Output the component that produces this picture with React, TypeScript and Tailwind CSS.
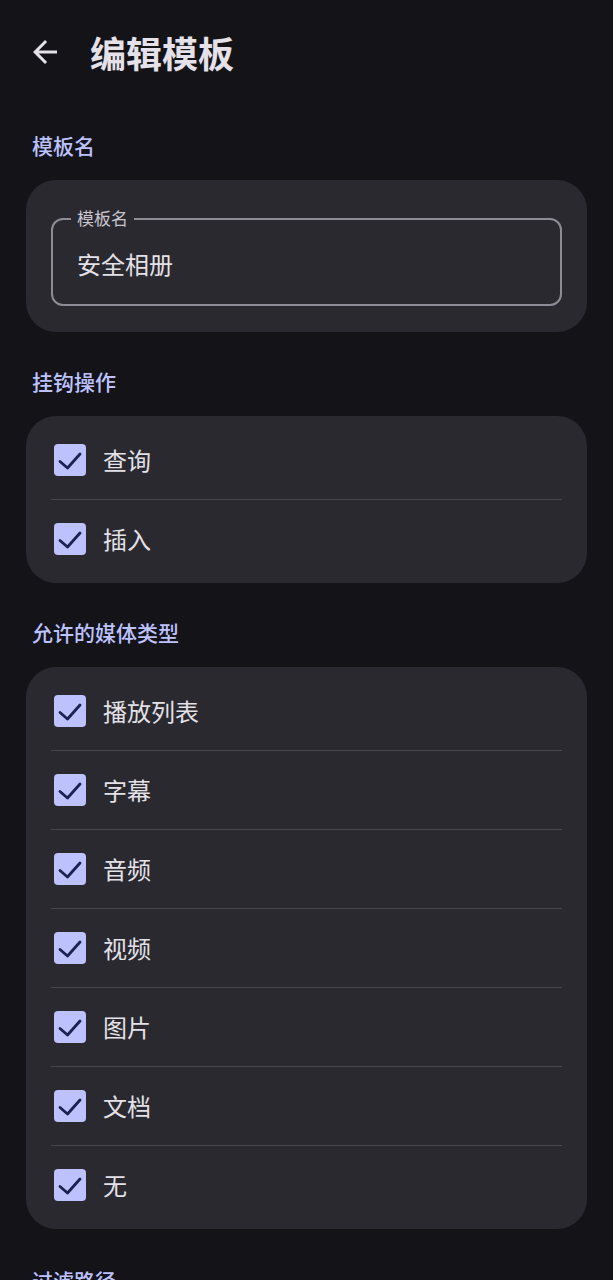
import React from "react";

const font = { fontFamily: '"Noto Sans CJK SC", "Noto Sans", sans-serif' };

function Check() {
  return (
    <div className="ml-[3px] flex h-[32px] w-[32px] shrink-0 items-center justify-center rounded-[4px] bg-[#bdc2ff]">
      <svg width="32" height="32" viewBox="0 0 32 32">
        <polyline points="6,17.5 13.5,24 26,10" fill="none" stroke="#1c2150" strokeWidth="2.8" strokeLinecap="round" strokeLinejoin="round" />
      </svg>
    </div>
  );
}

function Rows({ items }: { items: string[] }) {
  return (
    <div className="mx-[26px] rounded-[30px] bg-[#29292f] px-[25px] py-[5px]">
      {items.map((t, i) => (
        <div key={t}>
          {i > 0 && <div className="h-px bg-[#46464f]" />}
          <div className="flex h-[78px] items-center gap-[17px]">
            <Check />
            <span className="text-[24px] leading-none text-[#e4e1e9]">{t}</span>
          </div>
        </div>
      ))}
    </div>
  );
}

function Label({ children, top }: { children: React.ReactNode; top: string }) {
  return (
    <div className={`${top} mb-[21px] px-[32px] text-[21px] font-medium leading-[28px] text-[#bdc2ff]`}>{children}</div>
  );
}

export default function App() {
  return (
    <div style={font} className="min-h-[1280px] w-[613px] overflow-hidden bg-[#131318]">
      <div className="flex h-[104px] items-center pl-[27px]">
        <svg width="36" height="36" viewBox="0 0 24 24" className="shrink-0">
          <path d="M20 11H7.83l5.59-5.59L12 4l-8 8 8 8 1.41-1.41L7.83 13H20v-2z" fill="#e4e1e9" />
        </svg>
        <h1 className="ml-[27px] text-[36px] font-bold leading-none text-[#e4e1e9]">编辑模板</h1>
      </div>

      <div className="pt-[27px] mb-[21px] px-[32px] text-[21px] font-medium leading-[28px] text-[#bdc2ff]">模板名</div>
      <div className="mx-[26px] rounded-[30px] bg-[#29292f] px-[25px] pb-[26px] pt-[38px]">
        <div className="relative flex h-[88px] items-center rounded-[12px] border-2 border-[#8f8c97] pl-[24px] pt-[3px]">
          <span className="absolute -top-[14px] left-[18px] bg-[#29292f] px-[6px] text-[17px] leading-[24px] text-[#c8c5d0]">模板名</span>
          <span className="text-[24px] leading-none text-[#e4e1e9]">安全相册</span>
        </div>
      </div>

      <Label top="mt-[35px]">挂钩操作</Label>
      <Rows items={["查询", "插入"]} />

      <Label top="mt-[35px]">允许的媒体类型</Label>
      <Rows items={["播放列表", "字幕", "音频", "视频", "图片", "文档", "无"]} />

      <Label top="mt-[37px]">过滤路径</Label>
    </div>
  );
}
